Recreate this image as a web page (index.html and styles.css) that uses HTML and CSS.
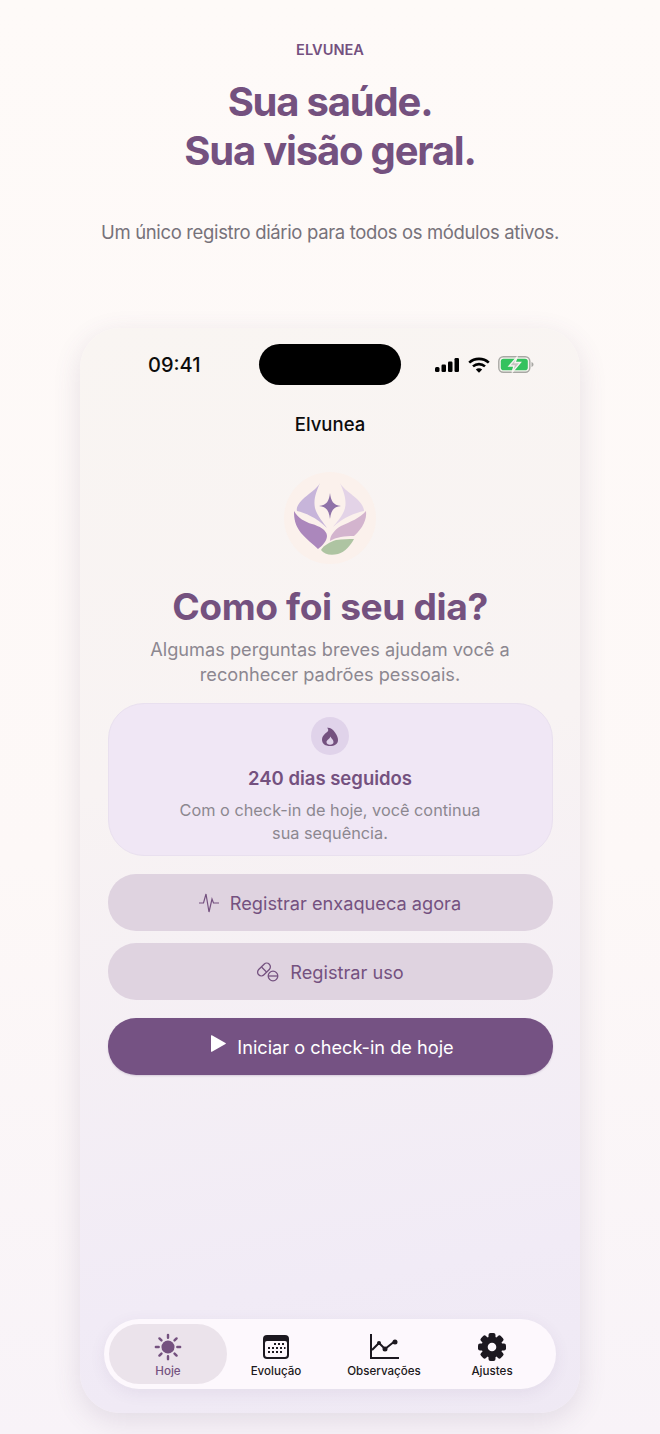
FILE: index.html
```html
<!DOCTYPE html>
<html lang="pt-BR">
<head>
  <meta charset="UTF-8" />
  <meta name="viewport" content="width=device-width, initial-scale=1.0" />
  <title>Elvunea</title>
  <link rel="stylesheet" href="styles.css">
</head>
<body>
  <header class="intro">
    <div class="brand">ELVUNEA</div>
    <h1>Sua saúde.<br>Sua visão geral.</h1>
    <p>Um único registro diário para todos os módulos ativos.</p>
  </header>

  <main class="phone">
    <div class="statusbar">
      <span class="time">09:41</span>
      <div class="island"></div>
      <div class="status-icons">
        <svg width="26" height="16" viewBox="0 0 26 16"><rect x="1" y="10" width="4.5" height="5" rx="1.5"/><rect x="7.5" y="7.5" width="4.5" height="7.5" rx="1.2"/><rect x="14" y="4.5" width="4.5" height="10.5" rx="1.2"/><rect x="20.5" y="1" width="4.5" height="14" rx="1.2"/></svg>
        <svg width="22" height="16" viewBox="0 0 22 16" fill="none" stroke="#000" stroke-width="2.6"><path d="M1.2 5.600C6.600.6 15.400.6 20.800 5.600"/><path d="M5 9.400c3.400-3 8.600-3 12 0"/><path d="M11 15.800l-3.200-3.400c1.800-1.500 4.600-1.500 6.400 0z" fill="#000" stroke="none"/></svg>
        <svg width="36" height="17" viewBox="0 0 36 17"><rect x=".8" y=".8" width="31" height="15.400" rx="4.500" fill="#f7f4f0" stroke="#a8a8a4" stroke-width="1.400"/><rect x="2.800" y="2.800" width="27" height="11.400" rx="2.800" fill="#34c25e"/><path d="M33.500 6v5c1.200-.4 2-1.400 2-2.500s-.8-2.100-2-2.500z" fill="#a8a8a4"/><path d="M19.500 .5l-8.500 9.500h5L14 16.500l8.500-10H17z" fill="#c4c6c0" stroke="#f7f4f0" stroke-width="1.300"/></svg>
      </div>
    </div>
    <div class="nav-title">Elvunea</div>

    <div class="logo">
      <svg width="92" height="92" viewBox="14 7 92 92">
        <path d="M50 18C47 24 38 29 32 35 28 39 26 43 27 46 35 48 46 52 57 63 54 58 47 51 45 43 43 34 47 25 50 18z" fill="#c7b5da"/>
        <path d="M70 18C73 24 82 29 88 35 92 39 94 43 94 46 85 48 74 52 63 62 66 58 73 51 75 43 77 34 73 25 70 18z" fill="#e3d3e7"/>
        <path d="M24 46C24 54 25 60 31 68 36 74 43 79 48 84 52 81 57 76 57 71 57 65 49 61 42 59 35 57 28 53 24 46z" fill="#ab87bc"/>
        <path d="M96 46C97 54 93 63 84 71 75 71 66 72 60 76 60 71 64 65 71 61 80 57 90 53 96 46z" fill="#d3b4ce"/>
        <path d="M51 85C54 80 60 77 66 75 72 74 79 74 84 74 81 80 75 87 68 89 60 91 54 89 51 85z" fill="#aec4a2"/>
        <path d="M60 28C61 36 63 40 71 41 63 42 61 46 60 54 59 46 57 42 49 41 57 40 59 36 60 28z" fill="#8f72a8"/>
      </svg>
    </div>

    <h2 class="question">Como foi seu dia?</h2>
    <p class="lead">Algumas perguntas breves ajudam você a reconhecer padrões pessoais.</p>

    <section class="streak">
      <div class="streak-icon">
        <svg width="16" height="19" viewBox="0 0 16 19"><path d="M5 .8C8 .4 11 2 13 5.500c2 3 3 5 3 7.500C16 17 12.500 19 8 19S0 17 0 12.500C0 10 1.500 8.200 3 6.800c1-1 2.800-1.600 3.200-3.200C6.400 2.600 5.800 1.500 5 .8z" fill="#74517f"/><path d="M8.500 9.500c.3 1.800 3 3 3 5.500 0 1.800-1.500 2.800-3.500 2.800S4.500 16.800 4.500 15c0-2 3.200-3 4-5.500z" fill="#e0d3ea"/></svg>
      </div>
      <h3>240 dias seguidos</h3>
      <p>Com o check-in de hoje, você continua<br>sua sequência.</p>
    </section>

    <a class="btn btn-soft">
      <svg width="20" height="20" viewBox="0 0 20 20" fill="none" stroke="#74517f" stroke-width="1.200"><path d="M0 10h4.500l2.500-9 3 18 3-13 1.500 4H20"/></svg>
      Registrar enxaqueca agora
    </a>
    <a class="btn btn-soft btn-gap">
      <svg width="23" height="20" viewBox="0 0 23 20" fill="none" stroke="#74517f" stroke-width="1.300"><rect x="-7.500" y="-3.700" width="15" height="7.400" rx="3.700" transform="translate(8 7.500) rotate(-45)"/><path d="M5.500 5l5 5"/><circle cx="17" cy="14" r="4.800"/><path d="M12.500 14h9"/></svg>
      Registrar uso
    </a>
    <a class="btn btn-main">
      <svg class="play" width="15" height="17" viewBox="0 0 15 17"><path d="M0 .8v15.400a.6.600 0 0 0 .9.500L14.500 9a.6.600 0 0 0 0-1L.9.300A.6.600 0 0 0 0 .8z" fill="#fff"/></svg>
      Iniciar o check-in de hoje
    </a>

    <nav class="tabbar">
      <div class="tab tab-active">
        <svg width="30" height="30" viewBox="0 0 30 30" fill="#74517f"><circle cx="15" cy="15" r="7"/><g stroke="#74517f" stroke-width="2.600" stroke-linecap="round"><path d="M15 2v3M15 25v3M2 15h3M25 15h3M5.800 5.800l2.200 2.200M22 22l2.200 2.200M24.200 5.800L22 8M8 22l-2.200 2.200"/></g></svg>
        <span>Hoje</span>
      </div>
      <div class="tab">
        <svg width="28" height="26" viewBox="0 0 28 26"><rect x="1" y="1" width="26" height="24" rx="4" fill="#1c1820"/><rect x="3" y="7" width="22" height="16" rx="2" fill="#fdf7fc"/><g fill="#1c1820"><rect x="12" y="9" width="2" height="2"/><rect x="16" y="9" width="2" height="2"/><rect x="20" y="9" width="2" height="2"/><rect x="6" y="13" width="2" height="2"/><rect x="10" y="13" width="2" height="2"/><rect x="14" y="13" width="2" height="2"/><rect x="18" y="13" width="2" height="2"/><rect x="22" y="13" width="1.500" height="2"/><rect x="6" y="17" width="2" height="2"/><rect x="10" y="17" width="2" height="2"/><rect x="14" y="17" width="2" height="2"/><rect x="18" y="17" width="2" height="2"/></g></svg>
        <span>Evolução</span>
      </div>
      <div class="tab">
        <svg width="30" height="26" viewBox="0 0 30 26" fill="none" stroke="#1c1820" stroke-width="2"><path d="M2 0v24h28"/><path d="M3 16l7-7 6 6 10-8"/><g fill="#1c1820" stroke="none"><circle cx="10" cy="9" r="2"/><circle cx="16" cy="15" r="2.500"/><circle cx="26" cy="8" r="2.500"/></g></svg>
        <span>Observações</span>
      </div>
      <div class="tab">
        <svg width="28" height="28" viewBox="0 0 28 28" fill="#1c1820"><g transform="translate(14 14)"><rect x="-3.500" y="-14" width="7" height="28" rx="2"/><rect x="-3.500" y="-14" width="7" height="28" rx="2" transform="rotate(45)"/><rect x="-3.500" y="-14" width="7" height="28" rx="2" transform="rotate(90)"/><rect x="-3.500" y="-14" width="7" height="28" rx="2" transform="rotate(135)"/><circle r="10.500"/><circle r="4.300" fill="#fdf8fd"/></g></svg>
        <span>Ajustes</span>
      </div>
    </nav>
  </main>
</body>
</html>
```
FILE: styles.css
```css
* {
  box-sizing: border-box;
}
html, body {
  height: 100%;
}
body {
  margin: 0;
  height: 1434px;
  overflow: hidden;
  background: linear-gradient(180deg, #fefaf8 0%, #fdf8f7 60%, #f8f3f8 100%);
  font-family: Inter, "Liberation Sans", sans-serif;
  color: #74517f;
}
.intro {
  text-align: center;
  padding-top: 42px;
  height: 328px;
}
.brand {
  font-size: 14.600px;
  line-height: 17px;
  font-weight: 600;
}
h1 {
  margin: 18px 0 0;
  font-size: 40px;
  line-height: 49px;
  font-weight: 700;
  letter-spacing: -1.200px;
}
.intro p {
  margin: 44px 0 0;
  font-size: 18.500px;
  line-height: 26px;
  color: #77727a;
  letter-spacing: -0.350px;
}
.phone {
  position: relative;
  width: 500px;
  height: 1085px;
  margin: 0 auto;
  padding: 0 28px;
  border-radius: 40px;
  background: linear-gradient(170deg, #f9f5f2 0%, #f8f3f3 40%, #f1ebf6 85%, #efe9f4 100%);
  box-shadow: 0 8px 28px rgba(90, 70, 110, 0.14);
  display: flex;
  flex-direction: column;
  align-items: center;
}
.statusbar {
  align-self: stretch;
  margin: 16px -28px 0;
  height: 41px;
  position: relative;
  display: flex;
  align-items: center;
  justify-content: space-between;
  padding: 0 46px 0 68px;
}
.time {
  font-size: 20px;
  font-weight: 500;
  color: #0c0c0c;
}
.island {
  position: absolute;
  left: 179px;
  top: 0;
  width: 142px;
  height: 41px;
  border-radius: 21px;
  background: #000;
}
.status-icons {
  display: flex;
  align-items: center;
  gap: 8px;
}
.nav-title {
  margin-top: 28px;
  font-size: 18.500px;
  line-height: 22px;
  font-weight: 500;
  color: #0c0c0c;
}
.logo {
  margin-top: 37px;
  width: 92px;
  height: 92px;
  border-radius: 50%;
  background: #fbf1ec;
}
.logo svg {
  display: block;
}
.question {
  margin: 21px 0 0;
  font-size: 37.200px;
  line-height: 44px;
  font-weight: 700;
  letter-spacing: -0.400px;
}
.lead {
  margin: 8px 0 0;
  width: 400px;
  text-align: center;
  font-size: 18.200px;
  line-height: 25px;
  color: #8c8790;
}
.streak {
  margin-top: 16px;
  width: 445px;
  height: 153px;
  border-radius: 36px;
  border: 1px solid #e9e0ef;
  background: #f0e7f5;
  padding-top: 13px;
  text-align: center;
}
.streak-icon {
  width: 38px;
  height: 38px;
  margin: 0 auto;
  border-radius: 50%;
  background: #e0d3ea;
  display: flex;
  align-items: center;
  justify-content: center;
}
.streak h3 {
  margin: 10px 0 0;
  font-size: 18.500px;
  line-height: 26px;
  font-weight: 600;
}
.streak p {
  margin: 8px 0 0;
  font-size: 16.300px;
  line-height: 23px;
  color: #8c8790;
}
.btn {
  width: 445px;
  height: 57px;
  border-radius: 28px;
  display: flex;
  align-items: center;
  justify-content: center;
  gap: 11px;
  font-size: 18.200px;
}
.btn-soft {
  margin-top: 18px;
  background: #dfd3e0;
}
.btn-gap {
  margin-top: 12px;
}
.btn-main {
  margin-top: 18px;
  background: #755283;
  color: #fff;
  box-shadow: 0 1px 2px rgba(90, 60, 110, 0.2);
}
.play {
  margin-top: -6px;
  margin-left: 5px;
}
.tabbar {
  position: absolute;
  left: 24px;
  bottom: 24px;
  width: 452px;
  height: 70px;
  border-radius: 35px;
  background: #fdf8fd;
  box-shadow: 0 4px 16px rgba(90, 70, 110, 0.08);
  display: grid;
  grid-template-columns: 118px 98px 118px 98px;
  padding: 5px;
  align-items: center;
}
.tab {
  display: flex;
  flex-direction: column;
  align-items: center;
  gap: 3px;
  height: 60px;
  padding-top: 9px;
  font-size: 11.600px;
  line-height: 14px;
  font-weight: 500;
  color: #1c1820;
}
.tab svg {
  height: 28px;
}
.tab-active {
  background: #ebe3eb;
  border-radius: 30px;
  color: #74517f;
}
```
